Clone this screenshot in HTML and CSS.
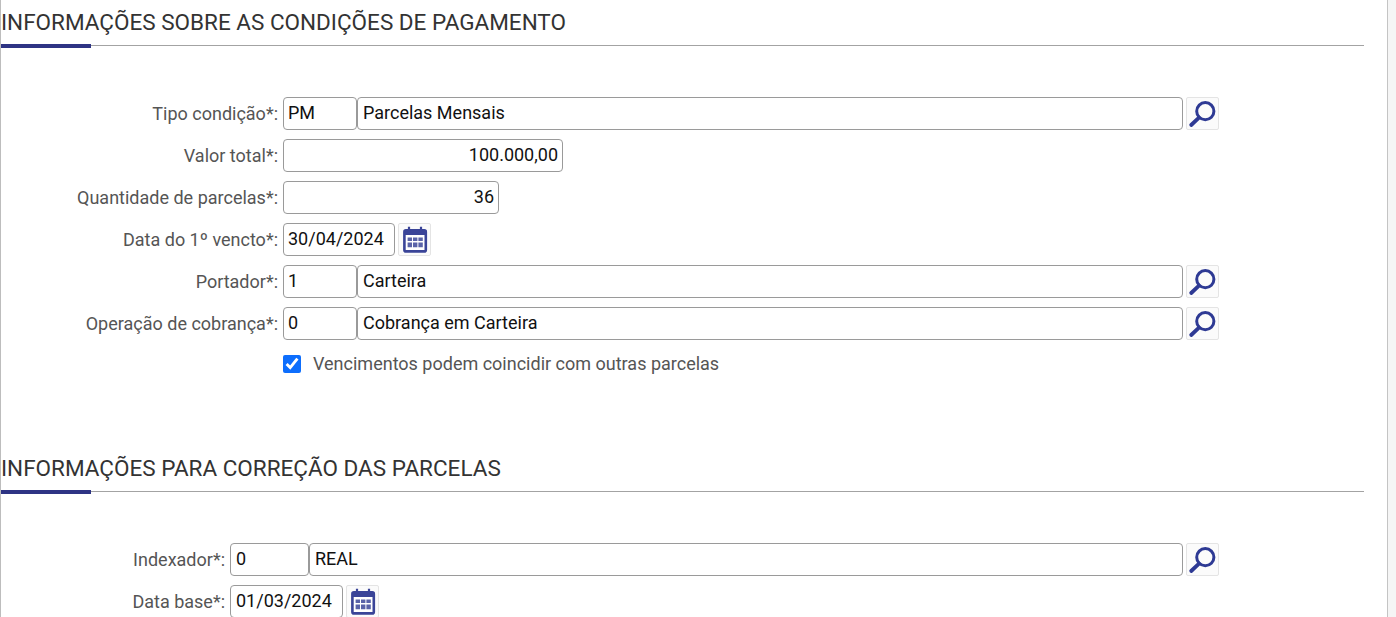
FILE: index.html
```html
<!DOCTYPE html>
<html lang="pt-BR">
<head>
<meta charset="utf-8">
<title>Condições de pagamento</title>
<link rel="stylesheet" href="styles.css">
</head>
<body>
<svg class="defs" width="0" height="0" aria-hidden="true">
  <symbol id="i-search" viewBox="1 1 31 31">
    <circle cx="19.3" cy="14.2" r="8.6" fill="none" stroke="#2e3a94" stroke-width="3"/>
    <path d="M13 20.6 5.2 28" fill="none" stroke="#2e3a94" stroke-width="3.8" stroke-linecap="round"/>
  </symbol>
  <symbol id="i-cal" viewBox="1 1 31 31">
    <rect x="6.4" y="7.4" width="21.4" height="21" rx="1.5" fill="#fff" stroke="#3a4498" stroke-width="2.6"/>
    <rect x="6" y="7" width="22.2" height="5" fill="#3a4498"/>
    <path d="M11 3.8v4.6M23 3.8v4.6" stroke="#3a4498" stroke-width="2.2"/>
    <path d="M9.6 14.4H14v3.6H9.6zM15 14.4h4.4v3.6H15zM20.4 14.4h4.4v3.6h-4.4zM9.6 19.6H14v4.6H9.6zM15 19.6h4.4v4.6H15zM20.4 19.6h4.4v4.6h-4.4z" fill="#5a63a8"/>
  </symbol>
</svg>
<div class="page">
  <main class="content">
    <section class="section">
      <h2 class="title">INFORMAÇÕES SOBRE AS CONDIÇÕES DE PAGAMENTO</h2>
      <div class="form wide-labels">
        <div class="row">
          <label class="label">Tipo condição*:</label>
          <input class="field w-code" value="PM">
          <input class="field grow desc" value="Parcelas Mensais">
          <button class="tool" type="button"><svg><use href="#i-search"/></svg></button>
        </div>
        <div class="row">
          <label class="label">Valor total*:</label>
          <input class="field w-value right" value="100.000,00">
        </div>
        <div class="row">
          <label class="label">Quantidade de parcelas*:</label>
          <input class="field w-qty right" value="36">
        </div>
        <div class="row">
          <label class="label">Data do 1º vencto*:</label>
          <input class="field w-date" value="30/04/2024">
          <button class="tool" type="button"><svg><use href="#i-cal"/></svg></button>
        </div>
        <div class="row">
          <label class="label">Portador*:</label>
          <input class="field w-code" value="1">
          <input class="field grow desc" value="Carteira">
          <button class="tool" type="button"><svg><use href="#i-search"/></svg></button>
        </div>
        <div class="row">
          <label class="label">Operação de cobrança*:</label>
          <input class="field w-code" value="0">
          <input class="field grow desc" value="Cobrança em Carteira">
          <button class="tool" type="button"><svg><use href="#i-search"/></svg></button>
        </div>
        <div class="check-row">
          <input class="check" type="checkbox" id="coincidir" checked>
          <label class="check-label" for="coincidir">Vencimentos podem coincidir com outras parcelas</label>
        </div>
      </div>
    </section>
    <section class="section second">
      <h2 class="title">INFORMAÇÕES PARA CORREÇÃO DAS PARCELAS</h2>
      <div class="form narrow-labels">
        <div class="row">
          <label class="label">Indexador*:</label>
          <input class="field w-index" value="0">
          <input class="field grow desc" value="REAL">
          <button class="tool" type="button"><svg><use href="#i-search"/></svg></button>
        </div>
        <div class="row">
          <label class="label">Data base*:</label>
          <input class="field w-date2" value="01/03/2024">
          <button class="tool" type="button"><svg><use href="#i-cal"/></svg></button>
        </div>
      </div>
    </section>
  </main>
  <aside class="rail"></aside>
</div>
</body>
</html>
```
FILE: styles.css
```css
* { box-sizing: border-box; }
html, body { margin: 0; height: 100%; overflow: hidden; background: #fff; }
body { font-family: Roboto, "Liberation Sans", sans-serif; color: #333; }
.defs { position: absolute; }
.page { display: flex; height: 617px; }
.content {
  width: 1388px;
  border-left: 1px solid #bdbdbd;
  border-right: 1px solid #c4c4c4;
  padding-right: 23px;
  overflow: hidden;
}
.rail { flex: 1; background: #f5f5f5; }
.title {
  position: relative;
  height: 46px;
  margin: 0;
  padding-top: 9px;
  font-size: 22.5px;
  line-height: 27px;
  font-weight: 400;
  color: #333;
  border-bottom: 1px solid #a3a3a3;
  white-space: nowrap;
}
.title::after {
  content: "";
  position: absolute;
  left: 0;
  bottom: -3px;
  width: 90px;
  height: 4px;
  background: #2e3484;
}
.form { display: flex; flex-direction: column; gap: 9px; padding-top: 51px; }
.row { display: flex; height: 33px; align-items: stretch; }
.label {
  flex: none;
  padding-right: 5px;
  font-size: 18px;
  line-height: 33px;
  text-align: right;
  color: #555;
  white-space: nowrap;
}
.wide-labels .label { width: 282px; }
.narrow-labels .label { width: 229px; }
.field {
  flex: none;
  height: 33px;
  padding: 0 4px 2px;
  border: 1px solid #9a9a9a;
  border-radius: 4px;
  font-family: Roboto, "Liberation Sans", sans-serif;
  font-size: 18px;
  color: #111;
  background: #fff;
  outline: none;
}
.desc { padding-left: 5px; padding-right: 5px; }
.wide-labels .grow { width: 826px; }
.narrow-labels .grow { width: 874px; }
.w-code { width: 74px; }
.w-index { width: 79px; padding-left: 5px; }
.w-value { width: 280px; }
.w-qty { width: 216px; }
.w-date { width: 112px; }
.w-date2 { width: 113px; padding-left: 5px; }
.right { text-align: right; }
.tool {
  flex: none;
  width: 33px;
  height: 33px;
  margin-left: 3px;
  padding: 0;
  border: 1px solid #e4e4e4;
  border-radius: 2px;
  background: #fbfbfb;
}
.tool svg { display: block; width: 31px; height: 31px; }
.check-row { display: flex; align-items: center; height: 18px; margin-top: 6px; margin-left: 282px; }
.check {
  flex: none;
  width: 18px;
  height: 18px;
  margin: 0 12px 0 0;
  accent-color: #0d6efd;
}
.check-label { font-size: 18px; line-height: 18px; color: #555; white-space: nowrap; }
.section.second { padding-top: 73px; }
```
